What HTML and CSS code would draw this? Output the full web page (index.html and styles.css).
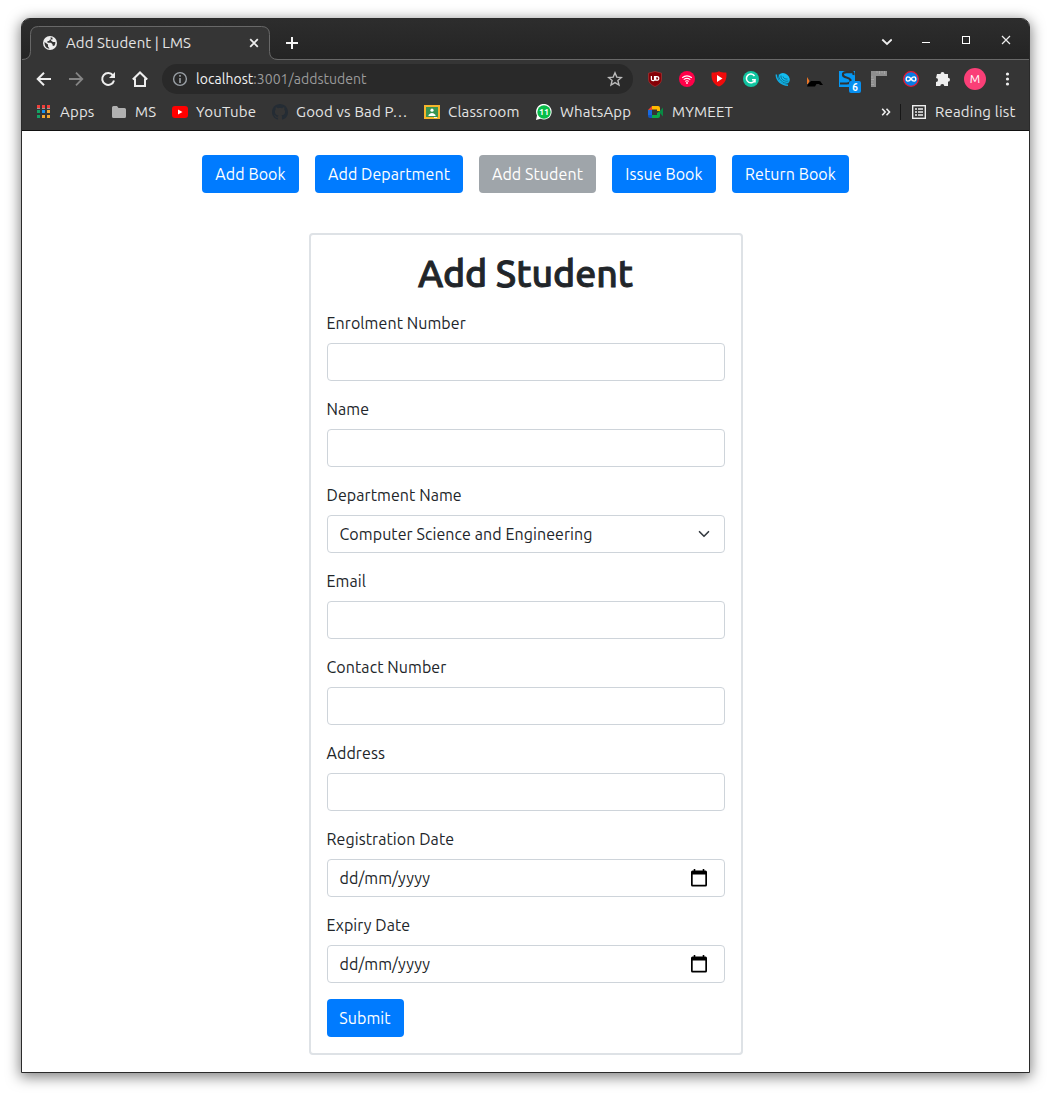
FILE: index.html
```html
<!DOCTYPE html>
<html lang="en">
<head>
<meta charset="utf-8">
<title>Add Student | LMS</title>
<link rel="stylesheet" href="styles.css">
</head>
<body>
<div class="window">
  <header class="chrome">
    <div class="tabstrip">
      <div class="tab">
        <svg class="tab-shape" width="256" height="34" viewBox="0 0 256 34"><path d="M0 33.500Q8 33.500 8 25.500V8.500Q8.500 .5 16.500 .5H239.500Q247.500 .5 247.500 8.500V25.500Q247.500 33.500 255.500 33.500V34H0Z" fill="#353535"/><path d="M0 33.500Q8.500 33.500 8.500 25.500V8.500Q8.500 .5 16.500 .5H239.500Q247.500 .5 247.500 8.500V25.500Q247.500 33.500 256 33.500" fill="none" stroke="#686868"/></svg>
        <svg class="globe" width="16" height="16" viewBox="0 0 16 16"><circle cx="8" cy="8" r="7" fill="#eee"/><path d="M2.500 7l3.500 2.500v2l1.500 2C4 13.500 2.500 11 2.500 7zM8.500 2.200l2 .5v1.800H8L7 6H5.500v1.700H9l1.500 1.500v1.300l1.500.4c1-1 1.500-2.300 1.300-4L11 7 9 5.500" fill="#353535"/></svg>
        <span class="tab-title">Add Student | LMS</span>
        <svg class="tab-close" width="10" height="10" viewBox="0 0 10 10"><path d="M1.200 1.200l7.600 7.600M8.800 1.200L1.200 8.800" stroke="#eee" stroke-width="1.800"/></svg>
      </div>
      <svg class="new-tab" width="12" height="12" viewBox="0 0 12 12"><path d="M6 0v12M0 6h12" stroke="#f5f5f5" stroke-width="2"/></svg>
      <div class="window-buttons">
        <svg width="12" height="12" viewBox="0 0 12 12"><path d="M2.300 5.500l4.700 4.500L11.700 5.500" fill="none" stroke="#eee" stroke-width="1.800"/></svg>
        <svg width="12" height="12" viewBox="0 0 12 12"><path d="M2 8.500h8" stroke="#fff"/></svg>
        <svg width="12" height="12" viewBox="0 0 12 12"><rect x="2.500" y="2.500" width="7" height="7" fill="none" stroke="#fff"/></svg>
        <svg width="12" height="12" viewBox="0 0 12 12"><path d="M2 2l8 8M10 2l-8 8" stroke="#eee" stroke-width="1.200"/></svg>
      </div>
    </div>
    <div class="toolbar">
      <svg width="16" height="16" viewBox="0 0 16 16"><path d="M15 8H2.500M8 1.700L1.700 8 8 14.300" fill="none" stroke="#eee" stroke-width="2"/></svg>
      <svg width="16" height="16" viewBox="0 0 16 16"><path d="M1 8h12.500M8 1.700L14.300 8 8 14.300" fill="none" stroke="#858585" stroke-width="1.800"/></svg>
      <svg width="16" height="16" viewBox="0 0 16 16"><path d="M13 4.300A6 6 0 1 0 14 9.500" fill="none" stroke="#eee" stroke-width="2"/><path d="M15 1v6H9z" fill="#eee"/></svg>
      <svg width="16" height="16" viewBox="0 0 16 16"><path d="M.8 8.500L8 1.500l7.200 7M3 7.500V15h10V7.500" fill="none" stroke="#eee" stroke-width="2"/></svg>
      <div class="omnibox">
        <svg width="16" height="16" viewBox="0 0 16 16"><circle cx="8" cy="8" r="6.400" fill="none" stroke="#9aa0a6" stroke-width="1.400"/><path d="M8 7v5M8 4v1.700" stroke="#9aa0a6" stroke-width="1.600"/></svg>
        <span class="url"><b>localhost</b>:3001/addstudent</span>
        <svg width="16" height="16" viewBox="0 0 16 16"><path d="M8 1.800l1.800 4.300 4.600.4-3.500 3 1.100 4.600L8 11.600l-4 2.500 1.100-4.600-3.500-3 4.600-.4z" fill="none" stroke="#bbb" stroke-width="1.400"/></svg>
      </div>
      <div class="extensions">
        <svg width="16" height="16" viewBox="0 0 16 16"><path d="M8 .5l6.500 1.700V8c0 4-3 6-6.500 7.500C4.500 14 1.500 12 1.500 8V2.200z" fill="#850006" stroke="#a33" stroke-width=".7"/><path d="M4.400 5v3.200q0 1.500 1.600 1.500T7.500 8.200V5M8.700 5.600h1.100q2 0 2 1.800t-2 1.800H8.700z" fill="none" stroke="#fff" stroke-width="1.200"/></svg>
        <svg width="16" height="16" viewBox="0 0 16 16"><circle cx="8" cy="8" r="8" fill="#ff0048"/><path d="M3.200 6.700q4.800-3.600 9.600 0M4.700 8.600q3.300-2.400 6.600 0M6.200 10.400q1.800-1.200 3.600 0" fill="none" stroke="#fff" stroke-width="1.100"/><circle cx="8" cy="12" r=".9" fill="#fff"/></svg>
        <svg width="16" height="16" viewBox="0 0 16 16"><path d="M8 .3c2 1.300 4.600 1.200 7.300 1.200 1 7-1.800 11.500-7.300 14C2.500 13-.3 8.500.7 1.500 3.400 1.500 6 1.600 8 .3z" fill="#f00b0b"/><path d="M6 4v7l5.500-3.500z" fill="#fff"/></svg>
        <svg width="16" height="16" viewBox="0 0 16 16"><circle cx="8" cy="8" r="8" fill="#11c3a0"/><path d="M11.500 5A4.400 4.400 0 1 0 12 8.800H9M12 8.800v2.700" fill="none" stroke="#fff" stroke-width="1.500"/></svg>
        <svg width="16" height="16" viewBox="0 0 16 16"><ellipse cx="9" cy="7.500" rx="6.200" ry="5" transform="rotate(40 9 7.500)" fill="#12bdf0"/><path d="M1.300 3.500C1.500 10 6.500 14 13 14.200" fill="none" stroke="#10aee6" stroke-width="1.500"/><path d="M3.500 3C3 8.500 8 12.800 13.500 12.300M6 4.500c-.5 4 3.500 6.500 7.500 5.500M8 5.500c.5 1.800 2.500 3 4.500 2.500" fill="none" stroke="#075d7a" stroke-width=".8"/></svg>
        <svg width="16" height="16" viewBox="0 0 16 16"><path d="M0 6l2.500 4-1.500 3H0z" fill="#ee7625"/><path d="M0 15.500l1-2.500 3-3h8q2 0 2.500 2L16 14h-3l-1-1H9.500L8 15.500z" fill="#000"/></svg>
        <svg class="sixth" width="24" height="24" viewBox="0 0 24 24"><path d="M1 4h16v16H1z" fill="#0798f2"/><path d="M14 5.200H8.500q-4 0-3.500 2.800.3 1.800 3.500 2.500T12.500 13q.5 3.500-4 3.500H2M11.500 4.500q4.500-.5 4 3.500" fill="none" stroke="#303030" stroke-width="2.200"/><rect x="11" y="14" width="12" height="12" rx="2" fill="#078ff0"/><text x="17" y="23.500" text-anchor="middle" class="badge">6</text></svg>
        <svg width="16" height="16" viewBox="0 0 16 16"><path d="M0 0h16v5H5v11H0z" fill="#8e8e8e"/><path d="M6 0v2M8.500 0v3M11 0v2M13.500 0v3M0 6h2M0 8.500h3M0 11h2M0 13.500h3" stroke="#aaa" stroke-width=".8"/></svg>
        <svg width="16" height="16" viewBox="0 0 16 16"><circle cx="8" cy="8" r="7.300" fill="#087de4" stroke="#ef1630" stroke-width="1.300"/><path d="M8 8C6 5 3.200 5.300 3.200 8S6 11 8 8s4.800-2.700 4.800 0S10 11 8 8z" fill="none" stroke="#fff" stroke-width="1.400"/></svg>
        <svg width="16" height="16" viewBox="0 0 16 16"><path d="M2 3h3.500a2 2 0 0 1 4 0H13v3.700a2 2 0 0 1 0 4V15H9.300a2 2 0 0 0-4 0H1v-4a2 2 0 0 0 0-4z" fill="#eee"/></svg>
        <svg class="avatar" width="22" height="22" viewBox="0 0 22 22"><circle cx="11" cy="11" r="11" fill="#fa3f77"/><text x="11" y="15.200" text-anchor="middle">M</text></svg>
        <svg width="16" height="16" viewBox="0 0 16 16"><g fill="#eee"><circle cx="8.500" cy="3" r="1.600"/><circle cx="8.500" cy="8" r="1.600"/><circle cx="8.500" cy="13" r="1.600"/></g></svg>
      </div>
    </div>
    <nav class="bookmarks">
      <a class="w-apps"><svg width="16" height="16" viewBox="0 0 16 16"><path d="M1 1h3v3H1zM6 1h3v3H6zM11 1h3v3h-3z" fill="#f03e3a"/><path d="M1 6h3v3H1z" fill="#15a364"/><path d="M6 6h3v3H6z" fill="#1994ef"/><path d="M11 6h3v3h-3zM6 11h3v3H6zM11 11h3v3h-3z" fill="#f5a832"/><path d="M1 11h3v3H1z" fill="#16a267"/><path d="M1 4.500h3M6 4.500h3M11 4.500h3" stroke="#999"/></svg><span>Apps</span></a>
      <a class="w-ms"><svg width="16" height="16" viewBox="0 0 16 16"><path d="M1 3.500q0-1.500 1.500-1.500H6l1.500 2h6q1.500 0 1.500 1.500v7q0 1.500-1.500 1.500h-11Q1 14 1 12.500z" fill="#b1b1b1"/></svg><span>MS</span></a>
      <a class="w-yt"><svg width="16" height="16" viewBox="0 0 16 16"><rect y="2" width="16" height="12" rx="3" fill="#f00"/><path d="M6 5.500v5L10.500 8z" fill="#fff"/></svg><span>YouTube</span></a>
      <a class="w-good"><svg width="16" height="16" viewBox="0 0 16 16"><path fill="#242c34" d="M8 0C3.580 0 0 3.580 0 8c0 3.540 2.290 6.530 5.470 7.590.4.070.55-.17.55-.38v-1.490c-2.230.48-2.690-.95-2.690-.95-.37-.91-.9-1.170-.9-1.170-.73-.49.05-.48.05-.48.8.05 1.230.82 1.230.82.71 1.220 1.870.87 2.330.66.070-.52.280-.87.500-1.070-1.780-.2-3.640-.89-3.640-3.950 0-.87.310-1.590.82-2.150-.08-.2-.36-1.010.08-2.120 0 0 .67-.21 2.200.82a7.500 7.500 0 0 1 4 0c1.530-1.040 2.200-.82 2.200-.82.440 1.110.16 1.920.08 2.120.51.560.82 1.270.82 2.150 0 3.070-1.870 3.750-3.650 3.950.29.250.54.730.54 1.480v2.200c0 .21.150.46.550.38A8 8 0 0 0 16 8c0-4.420-3.580-8-8-8z"/></svg><span>Good vs Bad P…</span></a>
      <a class="w-class"><svg width="16" height="16" viewBox="0 0 16 16"><path d="M0 1h16v14H0z" fill="#f5b52c"/><path d="M2 3h12v10H2z" fill="#389552"/><circle cx="8" cy="6.200" r="1.600" fill="#fff"/><path d="M4.500 11q3.500-4 7 0v1h-7z" fill="#fff"/><path d="M10 13h3v1h-3z" fill="#eee"/></svg><span>Classroom</span></a>
      <a class="w-wa"><svg width="16" height="16" viewBox="0 0 16 16"><path d="M0 16l1-4.500a7.800 7.800 0 1 1 3.500 3.300z" fill="#fff"/><circle cx="8" cy="8" r="6.700" fill="#09bd49"/><text x="8" y="11.300" text-anchor="middle" class="count">11</text></svg><span>WhatsApp</span></a>
      <a class="w-meet"><svg width="16" height="16" viewBox="0 0 16 16"><path d="M4 2h6q2 0 2 2v3H9V5.500H4z" fill="#ffba00"/><path d="M4 2v4H0z" fill="#ea4335"/><path d="M0 6h4v5H0z" fill="#1769e0"/><path d="M0 11h4v3H2q-2 0-2-2z" fill="#1256bd"/><path d="M4 11h5V9l3-2v5q0 2-2 2H4z" fill="#0bab49"/><path d="M11 8l4-4.500v9z" fill="#078a43"/></svg><span>MYMEET</span></a>
      <svg class="more" width="10" height="10" viewBox="0 0 10 10"><path d="M1.200 1.800L4.200 5l-3 3.200M5.500 1.800L8.500 5l-3 3.200" fill="none" stroke="#eee" stroke-width="1.600"/></svg>
      <i class="divider"></i>
      <a class="w-reading"><svg width="14" height="14" viewBox="0 0 14 14"><rect x=".7" y=".7" width="12.600" height="12.600" fill="none" stroke="#eee" stroke-width="1.400"/><path d="M3 4h2M3 7h2M3 10h2M6 4h5M6 7h5M6 10h5" stroke="#eee" stroke-width="1.600"/></svg><span>Reading list</span></a>
    </nav>
  </header>
  <main class="page">
    <nav class="menu">
      <button class="btn book">Add Book</button>
      <button class="btn department">Add Department</button>
      <button class="btn student" disabled>Add Student</button>
      <button class="btn issue">Issue Book</button>
      <button class="btn return">Return Book</button>
    </nav>
    <form class="card">
      <h1>Add Student</h1>
      <label>Enrolment Number</label><div class="field"></div>
      <label>Name</label><div class="field"></div>
      <label>Department Name</label>
      <div class="field"><span>Computer Science and Engineering</span><svg class="caret" width="16" height="12" viewBox="0 0 16 16"><path d="M2 5l6 6 6-6" fill="none" stroke="#343a40" stroke-width="2.200" stroke-linecap="round" stroke-linejoin="round"/></svg></div>
      <label>Email</label><div class="field"></div>
      <label>Contact Number</label><div class="field"></div>
      <label>Address</label><div class="field"></div>
      <label>Registration Date</label>
      <div class="field"><span>dd/mm/yyyy</span><svg class="calendar" width="16" height="18" viewBox="0 0 16 18"><path d="M2.700 0h1.600v1.500h7.400V0h1.600v1.500H14.500q1.500 0 1.500 1.500V16q0 1.500-1.500 1.500h-13Q0 17.500 0 16V3q0-1.500 1.500-1.500h1.200zM1.700 5.500v10.300h12.600V5.500z" fill="#000" fill-rule="evenodd"/></svg></div>
      <label>Expiry Date</label>
      <div class="field"><span>dd/mm/yyyy</span><svg class="calendar" width="16" height="18" viewBox="0 0 16 18"><path d="M2.700 0h1.600v1.500h7.400V0h1.600v1.500H14.500q1.500 0 1.500 1.500V16q0 1.500-1.500 1.500h-13Q0 17.500 0 16V3q0-1.500 1.500-1.500h1.200zM1.700 5.500v10.300h12.600V5.500z" fill="#000" fill-rule="evenodd"/></svg></div>
      <button type="button" class="btn submit">Submit</button>
    </form>
  </main>
</div>
</body>
</html>
```
FILE: styles.css
```css
* { box-sizing: border-box; }
html { height: 1097px; }
body { margin: 0; height: 1097px; padding: 18px 0 0 21px; background: #fff; font: 16px/24px Ubuntu, "Noto Sans", sans-serif; letter-spacing: .08px; color: #212529; }
svg { display: block; flex: none; }
span { white-space: nowrap; }
.window { width: 1009px; height: 1055px; border: 1px solid #2a2a2a; border-radius: 9px 9px 0 0; background: #fff; box-shadow: 0 3px 14px 1px rgba(0,0,0,.5); }
.chrome { height: 112px; background: #353535; border-bottom: 1px solid #111; border-radius: 8px 8px 0 0; font-size: 15px; color: #e4e4e4; }
.tabstrip { height: 41px; display: flex; align-items: flex-start; background: linear-gradient(#2d2d2d, #242424); border-bottom: 1px solid #686868; border-radius: 8px 8px 0 0; }
.tab { position: relative; width: 256px; height: 34px; margin-top: 7px; display: flex; align-items: center; padding: 0 19px 0 20px; }
.tab-shape { position: absolute; left: 0; top: 0; }
.globe, .tab-title, .tab-close { position: relative; }
.tab-title { width: 175px; margin-left: 8px; letter-spacing: .06px; }
.tab-close { margin-left: 8px; }
.new-tab { margin: 18px 0 0 8px; }
.window-buttons { margin: 15px 17px 0 auto; display: flex; gap: 28px; }
.toolbar { height: 38px; display: flex; align-items: center; gap: 16px; padding: 0 14px; }
.omnibox { width: 471px; height: 30px; margin-left: -2px; padding: 0 10px; display: flex; align-items: center; border-radius: 15px; background: #292929; }
.url { margin: 0 auto 0 8px; color: #9b9b9b; font-size: 14px; letter-spacing: .04px; }
.url b { font-weight: 400; color: #f2f2f2; }
.extensions { display: flex; align-items: center; gap: 16px; margin-left: -2px; }
.sixth { overflow: visible; margin: 0 -7px 0 -1px; }
.avatar { margin: 0 -3px; fill: #fff; font-size: 12px; }
.badge { font-size: 10px; font-weight: 700; fill: #fff; }
.count { font-size: 9px; font-weight: 700; fill: #fff; letter-spacing: 0; }
.bookmarks { height: 28px; display: flex; align-items: center; padding-left: 14px; letter-spacing: .18px; }
.bookmarks a { display: flex; align-items: center; gap: 8px; height: 28px; }
.w-apps { width: 75px; }
.w-ms { width: 61px; }
.w-yt { width: 100px; }
.w-good { width: 152px; }
.w-class { width: 112px; }
.w-wa { width: 112px; }
.w-meet { width: 233px; }
.bookmarks .w-reading { gap: 9px; }
.divider { width: 1px; height: 16px; margin: 0 11px 0 9px; background: #171717; }
.page { padding: 24px 0 0; }
.menu { display: flex; justify-content: center; gap: 16px; margin-bottom: 40px; }
.btn { height: 38px; padding: 0; border: 0; border-radius: 4px; background: #007bff; color: #fff; font: inherit; letter-spacing: inherit; white-space: nowrap; }
.btn:disabled { background: #9fa5aa; color: #fff; }
.book { width: 97px; }
.department { width: 148px; }
.student { width: 117px; }
.issue { width: 104px; }
.return { width: 117px; }
.submit { display: block; width: 77px; }
.card { width: 434px; height: 822px; margin: 0 auto; padding: 14px 16px 16px; border: 2px solid #dee2e6; border-radius: 4px; }
h1 { margin: 0 0 14px; height: 48px; font-size: 37.500px; line-height: 48px; font-weight: 500; letter-spacing: -.05px; text-align: center; white-space: nowrap; -webkit-text-stroke: .9px #212529; }
label { display: block; height: 24px; margin-bottom: 8px; }
.field { height: 38px; margin-bottom: 16px; padding: 0 12px; border: 1px solid #ced4da; border-radius: 4px; display: flex; align-items: center; justify-content: space-between; }
.calendar { margin-right: 5px; }
```
